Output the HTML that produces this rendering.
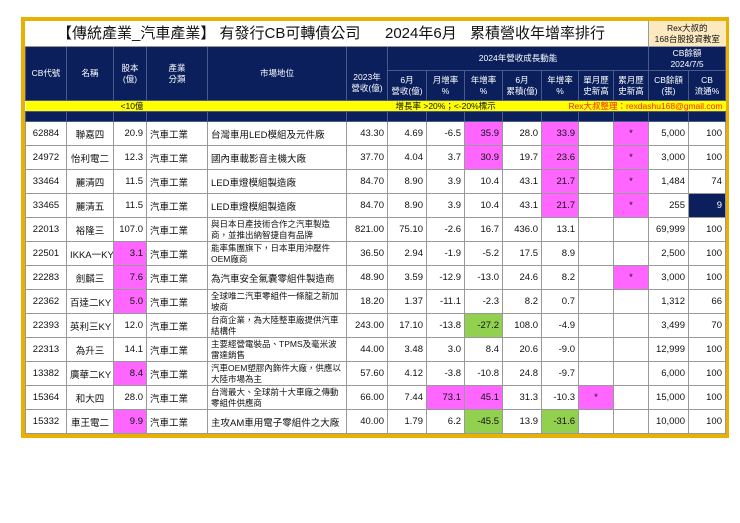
<!DOCTYPE html>
<html><head><meta charset="utf-8"><style>
body{margin:0;width:740px;height:523px;background:#fff;position:relative;overflow:hidden;font-family:"Liberation Sans","Noto Sans CJK TC",sans-serif;}
.frame{position:absolute;left:21px;top:17px;width:700px;border:4px solid #e8b000;}
table{border-collapse:collapse;table-layout:fixed;width:700px;}
td{padding:0 3px;font-size:9.5px;color:#111;border:1px solid #999;white-space:nowrap;overflow:hidden;height:23px;vertical-align:middle;}
.h td{background:#0a1f5c;color:#fff;text-align:center;border:1px solid #4a5a8a;font-size:8.5px;line-height:11px;}
.r{text-align:right}.c{text-align:center}
.m{background:#ff66ff}.g{background:#92d050}.n{background:#0a1f5c;color:#fff}
.w{white-space:normal;line-height:11px;font-size:8.5px}
.title td{height:25px;border:none;border-bottom:1px solid #999;}
tr.y td{height:10px;border:none;font-size:8.5px;line-height:10px;background:#ffff00;}
tr.s td{height:9px;line-height:9px;font-size:1px;}
.t{position:absolute;top:25px;font-size:15px;line-height:18px;color:#111;white-space:nowrap;z-index:2;}
</style></head><body>
<div class="frame">
<table>
<colgroup><col style="width:41px"><col style="width:47px"><col style="width:33px"><col style="width:61px"><col style="width:139px"><col style="width:41px"><col style="width:39px"><col style="width:38px"><col style="width:38px"><col style="width:39px"><col style="width:37px"><col style="width:35px"><col style="width:35px"><col style="width:40px"><col style="width:37px"></colgroup>
<tr class="title"><td colspan="13"></td><td colspan="2" style="background:#fde9c0;text-align:center;font-size:8.5px;line-height:11px;border-left:1px solid #999;">Rex大叔的<br>168台股投資教室</td></tr>
<tr class="h"><td rowspan="2" style="height:51px">CB代號</td><td rowspan="2">名稱</td><td rowspan="2">股本<br>(億)</td><td rowspan="2">產業<br>分類</td><td rowspan="2">市場地位</td><td rowspan="2" style="vertical-align:bottom;padding-bottom:6px">2023年<br>營收(億)</td><td colspan="7" style="height:21px">2024年營收成長動能</td><td colspan="2">CB餘額<br>2024/7/5</td></tr>
<tr class="h"><td style="height:29px">6月<br>營收(億)</td><td>月增率<br>%</td><td>年增率<br>%</td><td>6月<br>累積(億)</td><td>年增率<br>%</td><td>單月歷<br>史新高</td><td>累月歷<br>史新高</td><td>CB餘額<br>(張)</td><td>CB<br>流通%</td></tr>
<tr class="y"><td colspan="2"></td><td colspan="4" style="padding-left:7px">&lt;10億</td><td colspan="4" style="padding-left:8px">增長率 &gt;20%；&lt;-20%標示</td><td colspan="5" style="color:#ff2000;text-align:right">Rex大叔整理：rexdashu168@gmail.com</td></tr>
<tr class="h s"><td></td><td></td><td></td><td></td><td></td><td></td><td></td><td></td><td></td><td></td><td></td><td></td><td></td><td></td><td></td></tr>
<tr><td class="c">62884</td><td class="c">聯嘉四</td><td class="r">20.9</td><td>汽車工業</td><td>台灣車用LED模組及元件廠</td><td class="r">43.30</td><td class="r">4.69</td><td class="r">-6.5</td><td class="r m">35.9</td><td class="r">28.0</td><td class="r m">33.9</td><td></td><td class="c m">*</td><td class="r">5,000</td><td class="r">100</td></tr>
<tr><td class="c">24972</td><td class="c">怡利電二</td><td class="r">12.3</td><td>汽車工業</td><td>國內車載影音主機大廠</td><td class="r">37.70</td><td class="r">4.04</td><td class="r">3.7</td><td class="r m">30.9</td><td class="r">19.7</td><td class="r m">23.6</td><td></td><td class="c m">*</td><td class="r">3,000</td><td class="r">100</td></tr>
<tr><td class="c">33464</td><td class="c">麗清四</td><td class="r">11.5</td><td>汽車工業</td><td>LED車燈模組製造廠</td><td class="r">84.70</td><td class="r">8.90</td><td class="r">3.9</td><td class="r">10.4</td><td class="r">43.1</td><td class="r m">21.7</td><td></td><td class="c m">*</td><td class="r">1,484</td><td class="r">74</td></tr>
<tr><td class="c">33465</td><td class="c">麗清五</td><td class="r">11.5</td><td>汽車工業</td><td>LED車燈模組製造廠</td><td class="r">84.70</td><td class="r">8.90</td><td class="r">3.9</td><td class="r">10.4</td><td class="r">43.1</td><td class="r m">21.7</td><td></td><td class="c m">*</td><td class="r">255</td><td class="r n">9</td></tr>
<tr><td class="c">22013</td><td class="c">裕隆三</td><td class="r">107.0</td><td>汽車工業</td><td class="w">與日本日產技術合作之汽車製造商，並推出納智捷自有品牌</td><td class="r">821.00</td><td class="r">75.10</td><td class="r">-2.6</td><td class="r">16.7</td><td class="r">436.0</td><td class="r">13.1</td><td></td><td></td><td class="r">69,999</td><td class="r">100</td></tr>
<tr><td class="c">22501</td><td class="c">IKKA一KY</td><td class="r m">3.1</td><td>汽車工業</td><td class="w">能率集團旗下，日本車用沖壓件OEM廠商</td><td class="r">36.50</td><td class="r">2.94</td><td class="r">-1.9</td><td class="r">-5.2</td><td class="r">17.5</td><td class="r">8.9</td><td></td><td></td><td class="r">2,500</td><td class="r">100</td></tr>
<tr><td class="c">22283</td><td class="c">劍麟三</td><td class="r m">7.6</td><td>汽車工業</td><td>為汽車安全氣囊零組件製造商</td><td class="r">48.90</td><td class="r">3.59</td><td class="r">-12.9</td><td class="r">-13.0</td><td class="r">24.6</td><td class="r">8.2</td><td></td><td class="c m">*</td><td class="r">3,000</td><td class="r">100</td></tr>
<tr><td class="c">22362</td><td class="c">百達二KY</td><td class="r m">5.0</td><td>汽車工業</td><td class="w">全球唯二汽車零組件一條龍之新加坡商</td><td class="r">18.20</td><td class="r">1.37</td><td class="r">-11.1</td><td class="r">-2.3</td><td class="r">8.2</td><td class="r">0.7</td><td></td><td></td><td class="r">1,312</td><td class="r">66</td></tr>
<tr><td class="c">22393</td><td class="c">英利三KY</td><td class="r">12.0</td><td>汽車工業</td><td class="w">台商企業，為大陸整車廠提供汽車結構件</td><td class="r">243.00</td><td class="r">17.10</td><td class="r">-13.8</td><td class="r g">-27.2</td><td class="r">108.0</td><td class="r">-4.9</td><td></td><td></td><td class="r">3,499</td><td class="r">70</td></tr>
<tr><td class="c">22313</td><td class="c">為升三</td><td class="r">14.1</td><td>汽車工業</td><td class="w">主要經營電裝品、TPMS及毫米波雷達銷售</td><td class="r">44.00</td><td class="r">3.48</td><td class="r">3.0</td><td class="r">8.4</td><td class="r">20.6</td><td class="r">-9.0</td><td></td><td></td><td class="r">12,999</td><td class="r">100</td></tr>
<tr><td class="c">13382</td><td class="c">廣華二KY</td><td class="r m">8.4</td><td>汽車工業</td><td class="w">汽車OEM塑膠內飾件大廠，供應以大陸市場為主</td><td class="r">57.60</td><td class="r">4.12</td><td class="r">-3.8</td><td class="r">-10.8</td><td class="r">24.8</td><td class="r">-9.7</td><td></td><td></td><td class="r">6,000</td><td class="r">100</td></tr>
<tr><td class="c">15364</td><td class="c">和大四</td><td class="r">28.0</td><td>汽車工業</td><td class="w">台灣最大、全球前十大車廠之傳動零組件供應商</td><td class="r">66.00</td><td class="r">7.44</td><td class="r m">73.1</td><td class="r m">45.1</td><td class="r">31.3</td><td class="r">-10.3</td><td class="c m">*</td><td></td><td class="r">15,000</td><td class="r">100</td></tr>
<tr><td class="c">15332</td><td class="c">車王電二</td><td class="r m">9.9</td><td>汽車工業</td><td>主攻AM車用電子零組件之大廠</td><td class="r">40.00</td><td class="r">1.79</td><td class="r">6.2</td><td class="r g">-45.5</td><td class="r">13.9</td><td class="r g">-31.6</td><td></td><td></td><td class="r">10,000</td><td class="r">100</td></tr>
</table>
</div>
<div class="t" style="left:57px">【傳統產業_汽車產業】 有發行CB可轉債公司</div>
<div class="t" style="left:385px">2024年6月</div>
<div class="t" style="left:470px">累積營收年增率排行</div>
</body></html>
